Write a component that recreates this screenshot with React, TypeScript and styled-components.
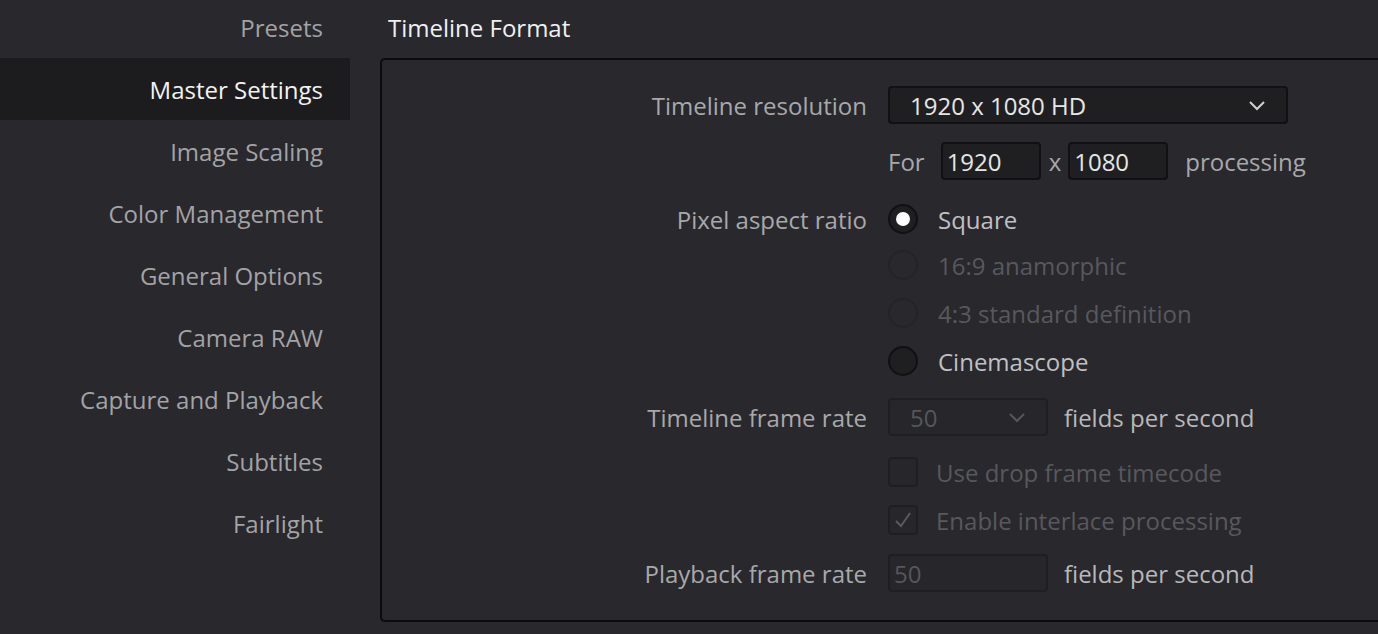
import React from "react";
import styled, { createGlobalStyle } from "styled-components";

const Global = createGlobalStyle`
  html, body { margin: 0; padding: 0; background: #28282d; overflow: hidden; }
  body { font-family: "Open Sans", "Noto Sans", sans-serif; }
`;

const Page = styled.div`
  display: flex;
  width: 1378px;
  height: 634px;
  background: #28282d;
`;

const Sidebar = styled.nav`
  width: 350px;
  flex-shrink: 0;
  display: flex;
  flex-direction: column;
`;

const NavItem = styled.div<{ $active?: boolean }>`
  height: 62px;
  display: flex;
  align-items: center;
  justify-content: flex-end;
  padding-right: 27px;
  font-size: 24px;
  color: ${(p) => (p.$active ? "#f2f2f2" : "#a3a3a6")};
  background: ${(p) => (p.$active ? "#1c1c1e" : "transparent")};
  margin-top: ${(p) => (p.$active ? "-4px" : "0")};
`;

const Main = styled.div`
  flex: 1;
  display: flex;
  flex-direction: column;
  padding-left: 30px;
`;

const Title = styled.div`
  height: 58px;
  display: flex;
  align-items: center;
  padding-left: 8px;
  padding-bottom: 4px;
  box-sizing: border-box;
  font-size: 24px;
  color: #f0f0f0;
`;

const Panel = styled.div`
  border: 2px solid #0c0c0e;
  border-right: none;
  border-radius: 5px 0 0 5px;
  height: 564px;
  box-sizing: border-box;
  padding-top: 25px;
  display: flex;
  flex-direction: column;
`;

const Row = styled.div<{ $h: number }>`
  height: ${(p) => p.$h}px;
  display: flex;
  align-items: center;
`;

const Label = styled.div`
  width: 506px;
  text-align: right;
  padding-right: 21px;
  box-sizing: border-box;
  font-size: 24px;
  color: #a8a8ab;
  flex-shrink: 0;
`;

const Field = styled.div<{ $w: number; $dim?: boolean }>`
  width: ${(p) => p.$w}px;
  height: 38px;
  box-sizing: border-box;
  border: 2px solid ${(p) => (p.$dim ? "#1f1f23" : "#111113")};
  border-radius: 4px;
  background: ${(p) => (p.$dim ? "#26262b" : "#1f1f22")};
  display: flex;
  align-items: center;
  justify-content: space-between;
  padding: 0 20px 0 20px;
  font-size: 24px;
  color: ${(p) => (p.$dim ? "#56565b" : "#e6e6e6")};
`;

const Input = styled(Field)`
  padding-left: 4px;
`;

const Text = styled.span<{ $dim?: boolean; $ml?: number }>`
  font-size: 24px;
  color: ${(p) => (p.$dim ? "#58585d" : "#a8a8ab")};
  margin-left: ${(p) => p.$ml ?? 0}px;
`;

const Radio = styled.div<{ $on?: boolean; $dim?: boolean }>`
  width: 30px;
  height: 30px;
  border-radius: 50%;
  box-sizing: border-box;
  border: 2px solid ${(p) => (p.$dim ? "#242428" : "#111113")};
  background: ${(p) => (p.$dim ? "#28282d" : "#1f1f22")};
  display: flex;
  align-items: center;
  justify-content: center;
  flex-shrink: 0;
  &::after {
    content: "";
    display: ${(p) => (p.$on ? "block" : "none")};
    width: 14px;
    height: 14px;
    border-radius: 50%;
    background: #fff;
  }
`;

const Check = styled.div`
  width: 30px;
  height: 30px;
  box-sizing: border-box;
  border: 2px solid #1f1f23;
  border-radius: 4px;
  background: #26262b;
  display: flex;
  align-items: center;
  justify-content: center;
  flex-shrink: 0;
`;

const Chevron = ({ color }: { color: string }) => (
  <svg width="18" height="12" viewBox="0 0 18 12">
    <path d="M2 3 L9 10 L16 3" fill="none" stroke={color} strokeWidth="2" />
  </svg>
);

const nav = [
  "Presets",
  "Master Settings",
  "Image Scaling",
  "Color Management",
  "General Options",
  "Camera RAW",
  "Capture and Playback",
  "Subtitles",
  "Fairlight",
];

export default function App() {
  return (
    <Page>
      <Global />
      <Sidebar>
        {nav.map((n) => (
          <NavItem key={n} $active={n === "Master Settings"}>
            {n === "Presets" ? <span style={{ marginTop: -8 }}>{n}</span> : n}
          </NavItem>
        ))}
      </Sidebar>
      <Main>
        <Title>Timeline Format</Title>
        <Panel>
          <Row $h={40}>
            <Label>Timeline resolution</Label>
            <Field $w={400}>
              1920 x 1080 HD
              <Chevron color="#d0d0d0" />
            </Field>
          </Row>
          <Row $h={72}>
            <Label />
            <Text>For</Text>
            <Input $w={100} style={{ marginLeft: 16 }}>1920</Input>
            <Text $ml={8}>x</Text>
            <Input $w={100} style={{ marginLeft: 7 }}>1080</Input>
            <Text $ml={17}>processing</Text>
          </Row>
          <Row $h={44}>
            <Label>Pixel aspect ratio</Label>
            <Radio $on />
            <Text $ml={20} style={{ color: "#c0c0c3" }}>Square</Text>
          </Row>
          <Row $h={48}>
            <Label />
            <Radio $dim />
            <Text $ml={20} $dim>16:9 anamorphic</Text>
          </Row>
          <Row $h={48}>
            <Label />
            <Radio $dim />
            <Text $ml={20} $dim>4:3 standard definition</Text>
          </Row>
          <Row $h={48}>
            <Label />
            <Radio />
            <Text $ml={20} style={{ color: "#c0c0c3" }}>Cinemascope</Text>
          </Row>
          <Row $h={64}>
            <Label>Timeline frame rate</Label>
            <Field $w={160} $dim>
              50
              <Chevron color="#56565b" />
            </Field>
            <Text $ml={16} style={{ color: "#b8b8bb" }}>fields per second</Text>
          </Row>
          <Row $h={46}>
            <Label />
            <Check />
            <Text $ml={18} $dim>Use drop frame timecode</Text>
          </Row>
          <Row $h={50}>
            <Label />
            <Check>
              <svg width="20" height="18" viewBox="0 0 20 18">
                <path d="M3 10 L8 15 L17 2" fill="none" stroke="#5a5a5f" strokeWidth="2" />
              </svg>
            </Check>
            <Text $ml={18} $dim>Enable interlace processing</Text>
          </Row>
          <Row $h={56}>
            <Label>Playback frame rate</Label>
            <Input $w={160} $dim>50</Input>
            <Text $ml={16} style={{ color: "#b8b8bb" }}>fields per second</Text>
          </Row>
        </Panel>
      </Main>
    </Page>
  );
}
